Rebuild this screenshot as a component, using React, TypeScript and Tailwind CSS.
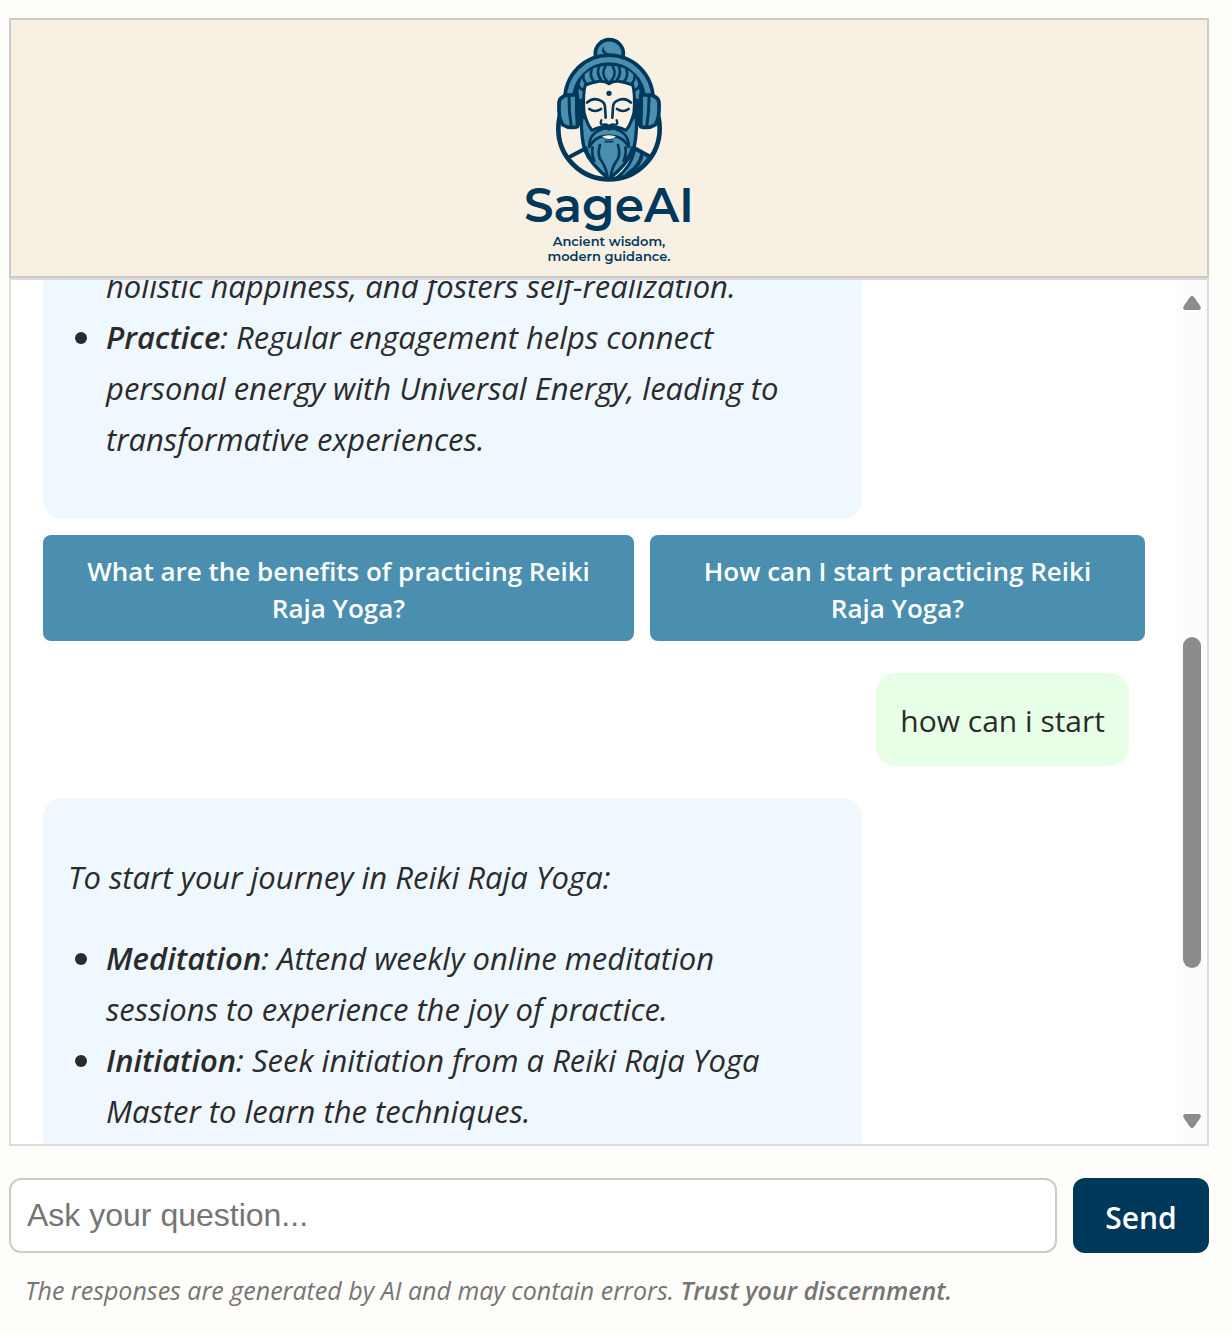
import React from "react";

const NAVY = "#00385c";
const BLUE = "#4a8fb0";
const CREAM = "#f9f0e4";

function HeadphoneCup() {
  return (
    <>
      <path d="M112 194 H82 Q54 200 57 226 Q55 262 68 283 Q88 296 112 289Z" fill={BLUE} stroke={NAVY} strokeWidth="11" />
      <path d="M87 196 Q86 242 94 290" stroke={NAVY} strokeWidth="9" />
      <path d="M108 198 Q106 242 112 286" stroke={NAVY} strokeWidth="6" />
    </>
  );
}

function HairSide() {
  return (
    <path
      d="M178 106 Q168 130 184 150 M155 116 Q148 138 161 152 M130 134 Q128 150 140 160 M112 160 Q118 174 130 180"
      stroke={NAVY}
      strokeWidth="8"
    />
  );
}

function BeardSide() {
  return (
    <path
      d="M138 352 Q146 384 163 392 Q154 368 158 352 M180 344 Q170 376 186 394 Q197 410 202 436"
      stroke={NAVY}
      strokeWidth="8"
    />
  );
}

function SageLogo() {
  const mirror = "matrix(-1 0 0 1 414 0)";
  return (
    <svg viewBox="-3 -1 420 465" className="h-[155px] w-[140px]" role="img" aria-label="SageAI logo" fill="none" strokeLinecap="round" strokeLinejoin="round">
      <circle cx="207" cy="295" r="152" fill={CREAM} stroke={NAVY} strokeWidth="14" />
      {/* shoulders and robe */}
      <path d="M84 382 L132 357 M332 380 L284 354" stroke={NAVY} strokeWidth="12" />
      <path d="M284 356 L328 380 Q296 430 228 444 Q276 408 284 356Z" fill={BLUE} stroke={NAVY} strokeWidth="8" />
      <path d="M306 370 Q302 404 262 432" stroke={NAVY} strokeWidth="11" />
      {/* bun */}
      <circle cx="208" cy="70" r="42" fill={BLUE} stroke={NAVY} strokeWidth="11" />
      <path d="M190 48 Q176 72 210 72 Q190 66 190 48Z" fill={NAVY} />
      {/* headband */}
      <path d="M69 207 A138 138 0 0 1 345 207 L316 288 L98 288Z" fill={NAVY} />
      <path d="M88 207 A119 119 0 0 1 326 207" stroke={BLUE} strokeWidth="16" />
      {/* hair */}
      <path d="M116 205 Q108 106 207 106 Q306 106 298 205Z" fill={BLUE} />
      <HairSide />
      <g transform={mirror}>
        <HairSide />
      </g>
      <path d="M196 108 Q180 134 207 158 Q234 134 218 108" fill={BLUE} stroke={NAVY} strokeWidth="7" />
      {/* beard */}
      <path d="M124 262 Q124 326 134 358 Q150 400 207 446 Q264 400 280 358 Q290 326 290 262Z" fill={BLUE} stroke={NAVY} strokeWidth="10" />
      {/* face */}
      <path d="M132 246 Q128 190 136 164 Q156 156 178 153 Q194 152 207 160 Q220 152 236 153 Q258 156 278 164 Q286 190 282 246 Q272 284 258 300 Q207 276 156 300 Q142 284 132 246Z" fill={CREAM} stroke={NAVY} strokeWidth="9" />
      <circle cx="207" cy="189" r="8" fill={NAVY} />
      <path d="M141 217 Q156 202 176 208 Q195 214 195 230 L197 262 M273 217 Q258 202 238 208 Q219 214 219 230 L217 262" stroke={NAVY} strokeWidth="8" />
      <path d="M148 236 Q165 248 183 236 M231 236 Q249 248 266 236" stroke={NAVY} strokeWidth="8" />
      <path d="M184 270 Q178 284 190 283 Q200 280 207 288 Q214 280 224 283 Q236 284 230 270" stroke={NAVY} strokeWidth="7" />
      {/* beard strands */}
      <BeardSide />
      <g transform={mirror}>
        <BeardSide />
      </g>
      {/* moustache */}
      <path d="M148 350 Q146 308 190 295 Q200 292 207 297 Q214 292 224 295 Q268 308 266 350 Q250 322 226 318 L188 318 Q164 322 148 350Z" fill={BLUE} stroke={NAVY} strokeWidth="8" />
      <path d="M184 318 Q207 308 230 318 Q222 328 207 328 Q192 328 184 318Z" fill={CREAM} stroke={NAVY} strokeWidth="3" />
      <path d="M196 334 H218" stroke={NAVY} strokeWidth="5" />
      {/* headphones */}
      <HeadphoneCup />
      <g transform={mirror}>
        <HeadphoneCup />
      </g>
    </svg>
  );
}

function Item({ title, children }: { title: string; children: React.ReactNode }) {
  return (
    <li className="relative before:absolute before:top-5 before:-left-[31px] before:size-3 before:rounded-full before:bg-[#2b2b2b]">
      <strong className="font-semibold">{title}</strong>: {children}
    </li>
  );
}

function BotMessage({ children }: { children: React.ReactNode }) {
  return (
    <article className="w-full max-w-[819px] rounded-[20px] bg-[#eff7ff] py-[54px] pr-10 pl-[25px] text-[31px] leading-[51px] italic">
      {children}
    </article>
  );
}

function Scrollbar() {
  return (
    <div aria-hidden="true" className="flex w-[30px] shrink-0 flex-col items-center bg-[#fcfcfc] py-4 text-[#8b8b8b]">
      <svg viewBox="0 0 18 14" className="h-[14px] w-[18px]" fill="currentColor">
        <path d="M7 1 Q9 -1 11 1 L17.5 10.5 Q18.5 13.5 16 14 H2 Q-.5 13.5 .5 10.5Z" />
      </svg>
      <div className="flex w-full flex-1 flex-col items-center">
        <div className="flex-[327]" />
        <div className="w-[18px] flex-[331] rounded-full bg-[#8b8b8b]" />
        <div className="flex-[146]" />
      </div>
      <svg viewBox="0 0 18 14" className="h-[14px] w-[18px]" fill="currentColor">
        <path d="M7 13 Q9 15 11 13 L17.5 3.5 Q18.5 .5 16 0 H2 Q-.5 .5 .5 3.5Z" />
      </svg>
    </div>
  );
}

export default function App() {
  return (
    <div className="flex h-screen flex-col bg-[#fffdf9] pt-[18px] pr-[23px] pb-[25px] pl-[9px] font-['Open_Sans',sans-serif] text-[#2b2b2b]">
      <header className="flex h-[260px] shrink-0 flex-col items-center border-2 border-[#cbcbcb] bg-[#f9f0e4] pt-[10px] font-[Montserrat,Lato,sans-serif] text-[#00385c]">
        <SageLogo />
        <h1 className="text-[47px] leading-[42px] font-semibold">SageAI</h1>
        <p className="pt-[7px] text-center text-[13px] leading-[15px] font-semibold">
          Ancient wisdom,
          <br />
          modern guidance.
        </p>
      </header>

      <main className="flex min-h-0 flex-1 overflow-hidden border-2 border-[#dcdcdf] bg-white">
        <div className="min-w-0 flex-1 overflow-hidden px-8 text-[30px] leading-[51px]">
          <div className="-mt-[73px]">
            <BotMessage>
              <ul className="pl-[38px]">
                <li>holistic happiness, and fosters self-realization.</li>
                <Item title="Practice">
                  Regular engagement helps connect personal energy with Universal Energy, leading to transformative
                  experiences.
                </Item>
              </ul>
            </BotMessage>
          </div>
          <div className="flex gap-4 pt-4 text-[26px] leading-[37px] font-semibold text-white">
            <button type="button" className="w-[591px] rounded-lg bg-[#4a8fb0] px-8 pt-[18px] pb-[14px]">
              What are the benefits of practicing Reiki Raja Yoga?
            </button>
            <button type="button" className="min-h-[106px] flex-1 rounded-lg bg-[#4a8fb0] px-8 pt-[18px] pb-[14px]">
              How can I start practicing Reiki Raja Yoga?
            </button>
          </div>
          <div className="flex justify-end py-8 pr-4">
            <p className="rounded-[20px] bg-[#e6ffe6] px-6 pt-[22px] pb-5">how can i start</p>
          </div>
          <BotMessage>
            <p className="pb-[30px]">To start your journey in Reiki Raja Yoga:</p>
            <ul className="pl-[38px]">
              <Item title="Meditation">Attend weekly online meditation sessions to experience the joy of practice.</Item>
              <Item title="Initiation">Seek initiation from a Reiki Raja Yoga Master to learn the techniques.</Item>
            </ul>
          </BotMessage>
        </div>
        <Scrollbar />
      </main>

      <form className="flex shrink-0 gap-4 pt-8" onSubmit={(e) => e.preventDefault()}>
        <input
          type="text"
          aria-label="Ask your question"
          placeholder="Ask your question..."
          className="h-[75px] min-w-0 flex-1 rounded-xl border-2 border-[#cbcbcb] bg-white px-4 font-['Liberation_Sans',sans-serif] text-[32px] placeholder:text-[#757575]"
        />
        <button type="submit" className="w-[136px] rounded-xl bg-[#00385c] pt-1 text-[30px] font-semibold text-white">
          Send
        </button>
      </form>
      <p className="shrink-0 pt-[17px] pl-4 text-[25px] leading-10 text-[#757575] italic">
        The responses are generated by AI and may contain errors.{" "}
        <strong className="font-semibold">Trust your discernment.</strong>
      </p>
    </div>
  );
}
